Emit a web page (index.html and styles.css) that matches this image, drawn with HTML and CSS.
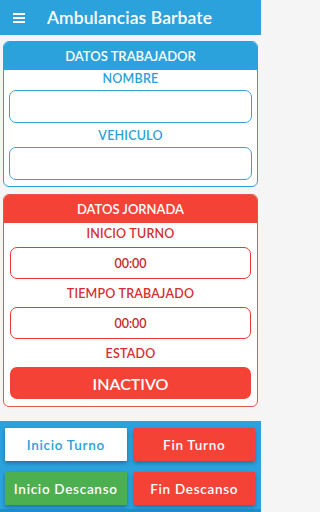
FILE: index.html
```html
<!DOCTYPE html>
<html lang="es">
<head>
<meta charset="utf-8">
<title>Ambulancias Barbate</title>
<link rel="stylesheet" href="styles.css">
</head>
<body>
<header class="topbar">
  <svg class="menu-icon" width="12" height="10" viewBox="0 0 12 10"><rect x="0" y="0" width="12" height="2" fill="#fff"/><rect x="0" y="4" width="12" height="2" fill="#fff"/><rect x="0" y="8" width="12" height="2" fill="#fff"/></svg>
  <span class="title">Ambulancias Barbate</span>
</header>
<main class="content">
  <section class="card card-blue">
    <div class="card-head">DATOS TRABAJADOR</div>
    <div class="card-body">
      <div class="label">NOMBRE</div>
      <div class="field"></div>
      <div class="label">VEHICULO</div>
      <div class="field"></div>
    </div>
  </section>
  <section class="card card-red">
    <div class="card-head">DATOS JORNADA</div>
    <div class="card-body">
      <div class="label">INICIO TURNO</div>
      <div class="field">00:00</div>
      <div class="label">TIEMPO TRABAJADO</div>
      <div class="field">00:00</div>
      <div class="label">ESTADO</div>
      <div class="status">INACTIVO</div>
    </div>
  </section>
</main>
<footer class="actions">
  <button class="btn btn-white">Inicio Turno</button>
  <button class="btn btn-red">Fin Turno</button>
  <button class="btn btn-green">Inicio Descanso</button>
  <button class="btn btn-red">Fin Descanso</button>
</footer>
</body>
</html>
```
FILE: styles.css
```css
* { box-sizing: border-box; }
html, body { margin: 0; padding: 0; }
body {
  width: 261px;
  height: 512px;
  background: #f5f5f5;
  font-family: "Lato", "Noto Sans", sans-serif;
  display: flex;
  flex-direction: column;
  overflow: hidden;
}
.topbar {
  height: 35px;
  background: #2ba2dc;
  display: flex;
  align-items: center;
  padding-left: 13px;
  color: #fff;
  flex-shrink: 0;
}
.menu-icon { display: block; margin-right: 22px; }
.title { font-size: 17.5px; font-weight: 600; letter-spacing: 0.1px; }
.content { padding: 6px 3px 0; }
.card {
  background: #fff;
  border-radius: 6px;
  overflow: hidden;
}
.card-blue { border: 1px solid #2ba2dc; }
.card-red { border: 1px solid #e4574d; margin-top: 7px; }
.card-head {
  height: 28px;
  line-height: 28px;
  text-align: center;
  color: #fff;
  font-size: 13px;
  font-weight: 600;
}
.card-blue .card-head { background: #2ba2dc; }
.card-red .card-head { background: #f44336; }
.card-body { padding: 0 4px 6px; }
.label {
  text-align: center;
  font-size: 12.5px;
  font-weight: 600;
  letter-spacing: 0.2px;
}
.card-blue .label { color: #2b9fd8; height: 20px; line-height: 18px; }
.card-blue .field {
  height: 33px;
  border: 1.5px solid #3aa3d6;
  border-radius: 7px;
  margin: 0 1px 4px;
}
.card-blue .field:last-child { margin-bottom: 0; }
.card-red .card-body { padding: 0 6px 7px; }
.card-red .label { color: #d32f2f; height: 24px; line-height: 22px; }
.card-red .field {
  height: 32px;
  border: 1.5px solid #e53935;
  border-radius: 7px;
  margin-bottom: 4px;
  display: flex;
  align-items: center;
  justify-content: center;
  color: #c62828;
  font-size: 12.5px;
  font-weight: 600;
}
.status {
  height: 32px;
  background: #f44336;
  border-radius: 7px;
  color: #fff;
  font-size: 16px;
  font-weight: 600;
  display: flex;
  align-items: center;
  justify-content: center;
}
.actions {
  margin-top: auto;
  background: #2ba2dc;
  padding: 7px 6px 7px 5px;
  display: grid;
  grid-template-columns: 1fr 1fr;
  column-gap: 7px;
  row-gap: 11px;
  box-shadow: inset 0 -3px 0 #1f8fc8;
}
.btn {
  height: 33px;
  border: none;
  border-radius: 1px;
  font-family: inherit;
  font-size: 13.5px;
  font-weight: 600;
  letter-spacing: 0.7px;
  box-shadow: 0 2px 4px rgba(0,0,0,0.3);
  padding: 0;
}
.btn-white { background: #fff; color: #2b9fd8; }
.btn-red { background: #f44336; color: #fff; }
.btn-green { background: #4caf50; color: #fff; }
```
